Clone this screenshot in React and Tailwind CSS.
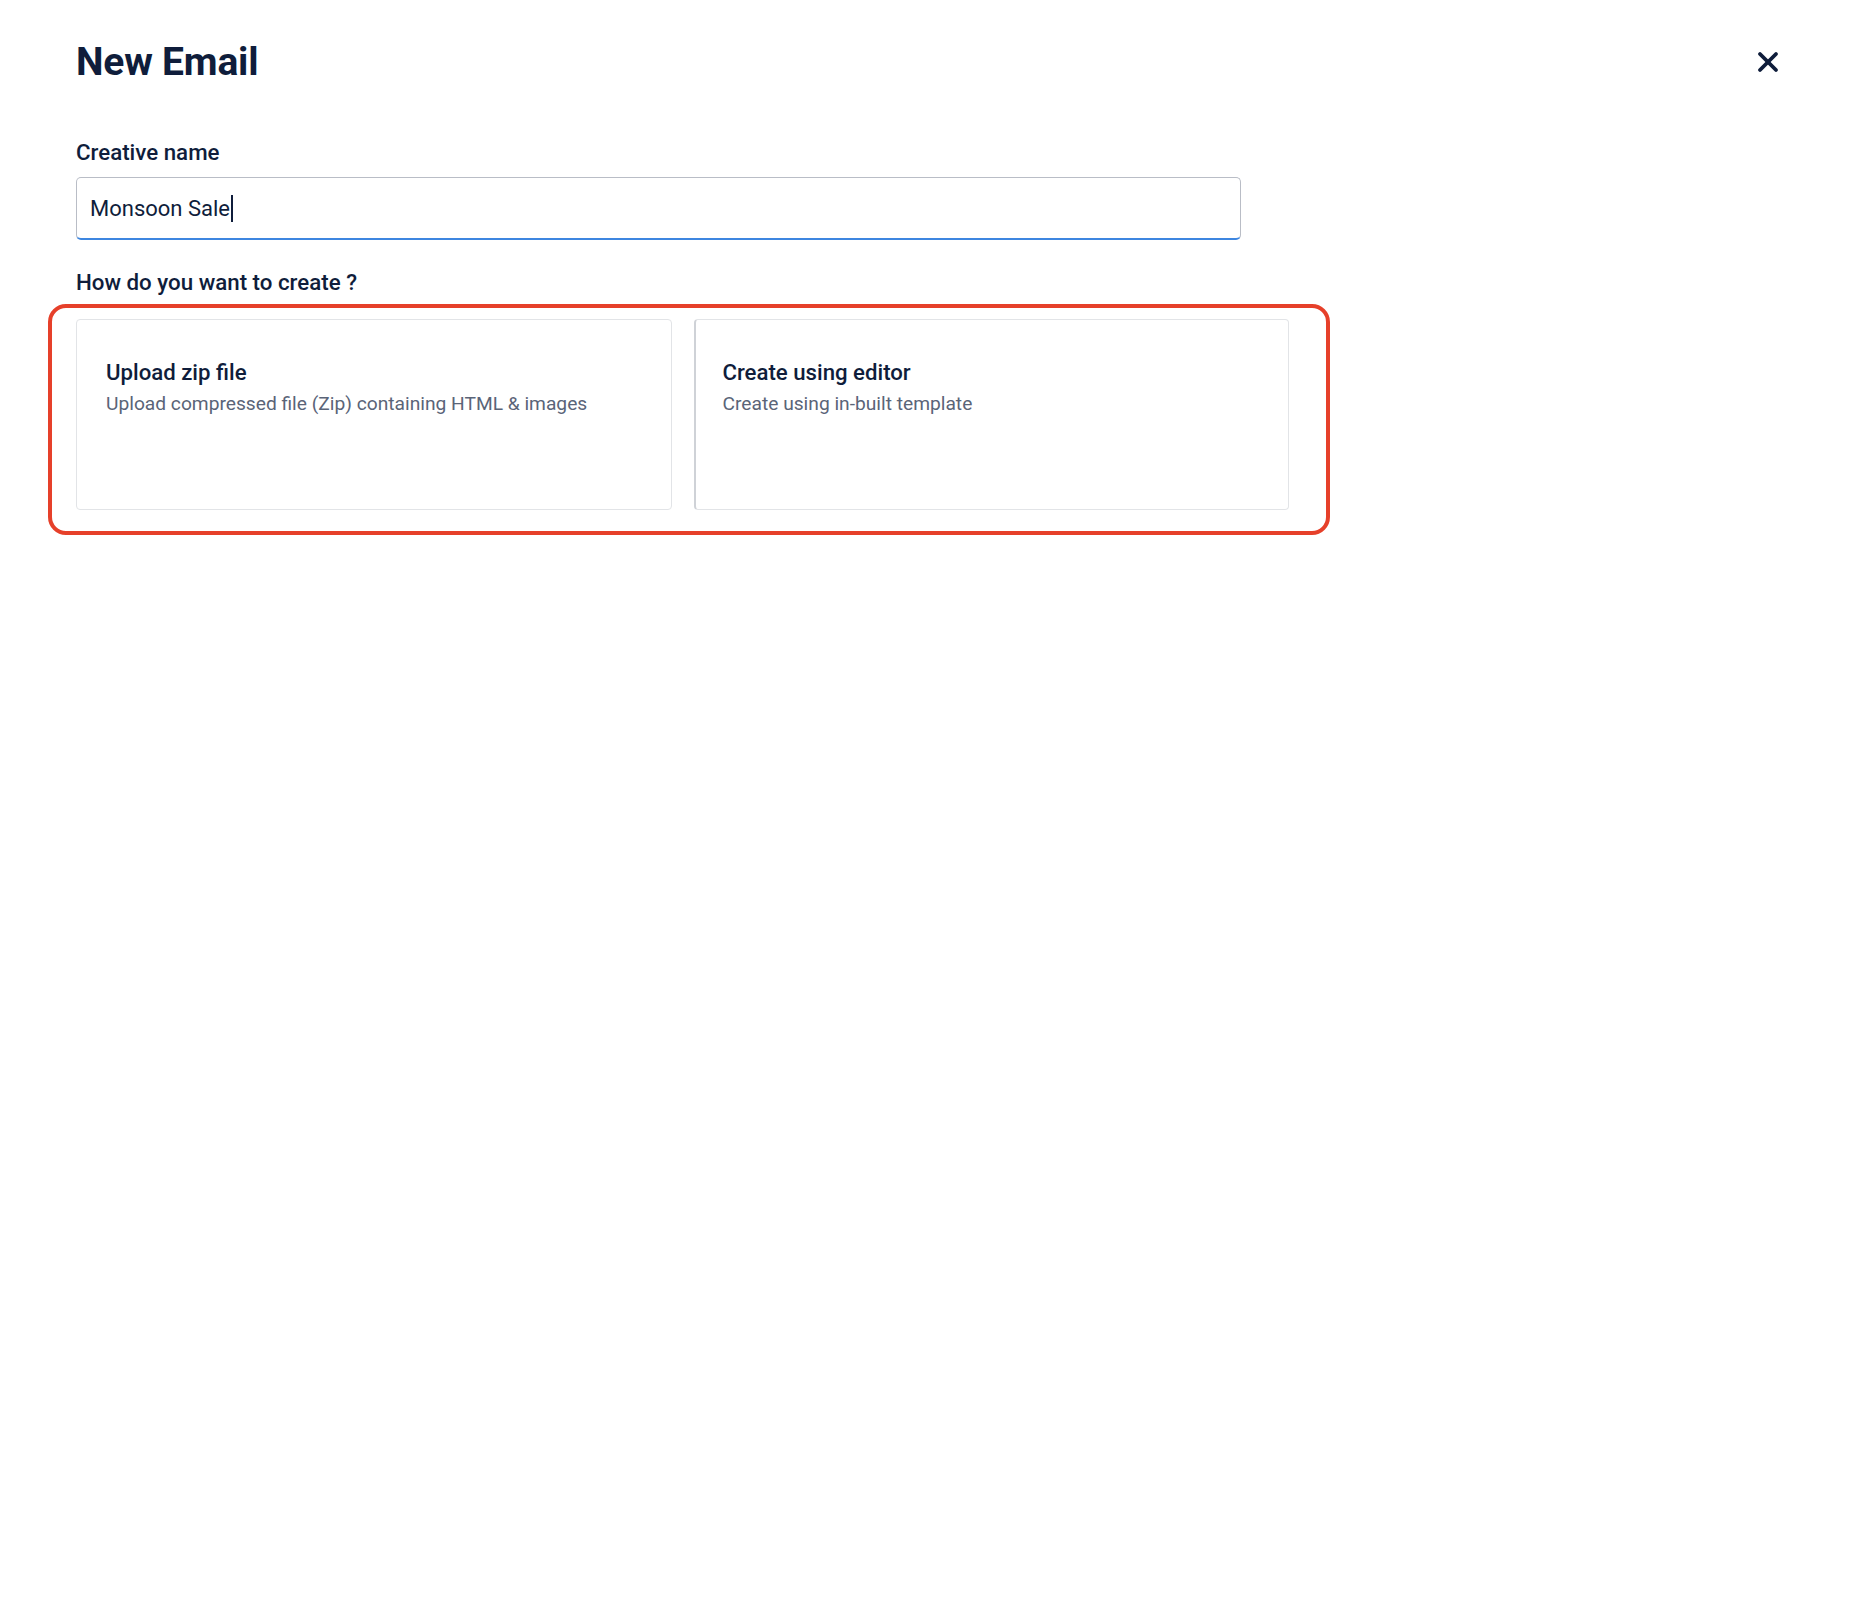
import { X } from 'lucide-react'

const options = [
  {
    title: 'Upload zip file',
    desc: 'Upload compressed file (Zip) containing HTML & images',
    extra: 'border-[#e2e4e7] pl-[29px]',
  },
  {
    title: 'Create using editor',
    desc: 'Create using in-built template',
    extra: 'border-[#e2e4e7] border-l-2 border-l-[#cfd2d7] pl-[27px]',
  },
]

export default function App() {
  return (
    <div
      className="min-h-[1612px] w-full bg-white text-[#0f1d3b]"
      style={{ fontFamily: 'Roboto, "Liberation Sans", sans-serif' }}
    >
      <div className="pl-[76px] pr-[80px] pt-[38px]">
        {/* Header */}
        <div className="flex items-center justify-between">
          <h1 className="text-[39px] font-bold leading-[48px] tracking-[-0.2px]">New Email</h1>
          <button type="button" className="text-[#0f1d3b]">
            <X className="w-[32px] h-[32px]" strokeWidth={2.9} />
          </button>
        </div>

        {/* Creative name */}
        <div className="mt-[53px] w-[1165px]">
          <label className="block text-[22.3px] font-medium leading-[26px]">Creative name</label>
          <div className="mt-[12px] h-[63px] rounded-[5px] border border-[#b9bdc6] border-b-2 border-b-[#3d86e0] px-[13px] flex items-center">
            <span className="text-[22px] leading-none pt-[2px]">Monsoon Sale</span>
            <span className="ml-[1px] inline-block w-[2px] h-[27px] bg-[#0f1d3b]" />
          </div>
        </div>

        {/* How to create */}
        <div className="mt-[29px]">
          <label className="block text-[22.3px] font-medium leading-[26px]">How do you want to create ?</label>
          <div className="relative mt-[24px] w-[1213px]">
            <div className="grid grid-cols-2 gap-[22px]">
              {options.map((o) => (
                <div
                  key={o.title}
                  className={`h-[191px] rounded-[4px] border bg-white pr-[29px] pt-[38px] ${o.extra}`}
                >
                  <div className="text-[22.2px] font-medium leading-[28px]">{o.title}</div>
                  <div className="mt-[6px] text-[19.2px] leading-[24px] text-[#5a6478]">{o.desc}</div>
                </div>
              ))}
            </div>
            {/* annotation */}
            <div className="pointer-events-none absolute -left-[28px] -top-[15px] -right-[41px] -bottom-[25px] rounded-[18px] border-[4px] border-[#e6402a]" />
          </div>
        </div>
      </div>
    </div>
  )
}
